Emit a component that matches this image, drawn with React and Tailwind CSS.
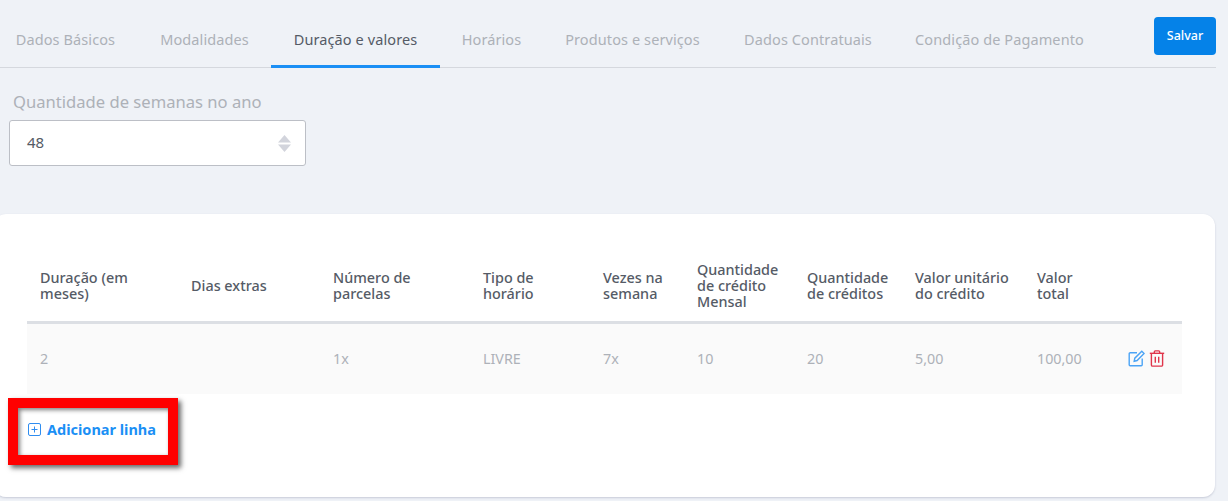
import React from 'react';

const tabs = [
  { label: 'Dados Básicos', width: 'w-[145px]' },
  { label: 'Modalidades', width: 'w-[133px]' },
  { label: 'Duração e valores', width: 'w-[169px]', active: true },
  { label: 'Horários', width: 'w-[103px]' },
  { label: 'Produtos e serviços', width: 'w-[179px]' },
  { label: 'Dados Contratuais', width: 'w-[172px]' },
  { label: 'Condição de Pagamento', width: 'w-[211px]' },
];

const columns = [
  { title: 'Duração (em meses)', value: '2', width: 'w-[151px]' },
  { title: 'Dias extras', value: '', width: 'w-[142px]' },
  { title: 'Número de parcelas', value: '1x', width: 'w-[150px]' },
  { title: 'Tipo de horário', value: 'LIVRE', width: 'w-[120px]' },
  { title: 'Vezes na semana', value: '7x', width: 'w-[94px]' },
  { title: 'Quantidade de crédito Mensal', value: '10', width: 'w-[110px]' },
  { title: 'Quantidade de créditos', value: '20', width: 'w-[108px]' },
  { title: 'Valor unitário do crédito', value: '5,00', width: 'w-[122px]' },
  { title: 'Valor total', value: '100,00', width: 'w-[90px]' },
];

function EditIcon() {
  return (
    <svg width="17" height="17" viewBox="0 0 17 17" fill="none" stroke="#4ba3f5" strokeWidth="1.4">
      <path d="M9 2.7H2.2a1 1 0 0 0-1 1v11a1 1 0 0 0 1 1h11a1 1 0 0 0 1-1V8.5" />
      <path d="M6.2 11.2l.6-3 7-7 2.3 2.3-7 7z" />
    </svg>
  );
}

function TrashIcon() {
  return (
    <svg width="16" height="17" viewBox="0 0 16 17" fill="none" stroke="#e0354b" strokeWidth="1.4">
      <path d="M.8 3.3h14.4" />
      <path d="M5.3 3.3V1.9a1 1 0 0 1 1-1h3.4a1 1 0 0 1 1 1v1.4" />
      <path d="M2.4 3.3v11.6a1.2 1.2 0 0 0 1.2 1.2h8.8a1.2 1.2 0 0 0 1.2-1.2V3.3" />
      <path d="M6.3 6.8v6M9.7 6.8v6" />
    </svg>
  );
}

export default function App() {
  return (
    <div className="relative h-[501px] w-[1228px] overflow-hidden bg-[#eff2f7] font-['Noto_Sans','Open_Sans',sans-serif]">
      <div className="mr-[12px] flex h-[68px] items-end border-b border-[#d5d8de]">
        <div className="flex ml-[-7px] flex-1">
          {tabs.map((tab) => (
            <div
              key={tab.label}
              className={`flex h-[47px] items-start justify-center whitespace-nowrap pt-[9px] text-[14.5px] leading-[20px] tracking-[0.1px] ${tab.width} ${
                tab.active ? 'border-b-[3px] border-[#1b8ff5] text-[#555b66] h-[48px] mb-[-1px]' : 'text-[#adb1b8]'
              }`}
            >
              {tab.label}
            </div>
          ))}
        </div>
        <button className="mb-[12px] h-[38px] w-[62px] rounded-[4px] bg-[#0582e8] text-[12.5px] font-medium text-white">
          Salvar
        </button>
      </div>

      <div className="pl-[9px] pt-[22px]">
        <div className="pl-[4px] text-[16.6px] leading-[24px] text-[#adb1b8]">Quantidade de semanas no ano</div>
        <div className="mt-[6px] flex h-[46px] w-[297px] items-center justify-between rounded-[3px] border border-[#bcbfc6] bg-white pb-[2px] pl-[17px] pr-[14px] text-[15px] text-[#555b66]">
          48
          <svg className="mt-[2px]" width="13" height="17" viewBox="0 0 13 17" fill="#d2d4dc">
            <path d="M6.5 0L13 7.5H0z" />
            <path d="M0 9.5h13L6.5 17z" />
          </svg>
        </div>
      </div>

      <div className="ml-[-6px] mt-[48px] h-[283px] w-[1221px] rounded-[12px] bg-white pl-[33px] pt-[37px] shadow-[0_1px_2px_rgba(150,155,180,0.45)]">
        <table className="w-[1155px] table-fixed border-collapse">
          <thead>
            <tr className="h-[71px] border-b-[3px] border-[#dcdfe4]">
              {columns.map((col) => (
                <th
                  key={col.title}
                  className={`pl-[13px] pr-[10px] text-left align-middle text-[14.4px] font-medium leading-[16px] text-[#555b66] ${col.width}`}
                >
                  {col.title}
                </th>
              ))}
              <th />
            </tr>
          </thead>
          <tbody>
            <tr className="h-[72px] bg-[#fafafa]">
              {columns.map((col) => (
                <td key={col.title} className="pl-[13px] text-[14.3px] text-[#adb1b8]">
                  {col.value}
                </td>
              ))}
              <td>
                <div className="flex items-center gap-[4px] pl-[14px]">
                  <EditIcon />
                  <TrashIcon />
                </div>
              </td>
            </tr>
          </tbody>
        </table>
        <div className="ml-[2px] mt-[25px] flex h-[20px] items-center gap-[5px] text-[14.5px] leading-[20px] font-bold text-[#1b8ff5]">
          <svg className="ml-[-1px] mr-[1px]" width="13" height="13" viewBox="0 0 13 13" fill="none" stroke="#2f8df0" strokeWidth="1">
            <rect x="0.5" y="0.5" width="12" height="12" rx="1.5" />
            <path d="M6.5 3.5v6M3.5 6.5h6" />
          </svg>
          Adicionar linha
        </div>
      </div>

      <div className="absolute left-[8px] top-[398px] h-[67px] w-[170px] border-[10px] border-[#ff0000] shadow-[3px_3px_5px_rgba(0,0,0,0.6),inset_2px_2px_4px_rgba(0,0,0,0.5)]" />
    </div>
  );
}
